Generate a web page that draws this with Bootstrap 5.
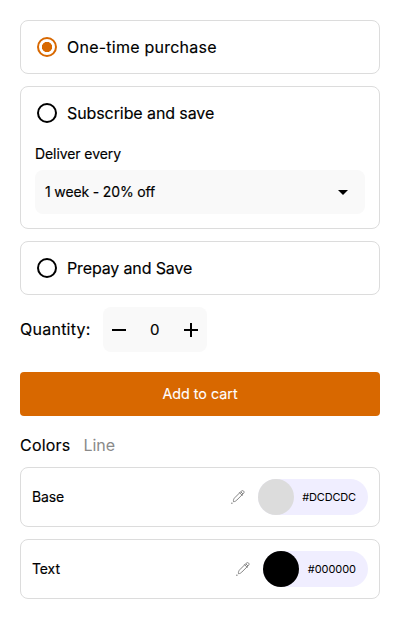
<!DOCTYPE html>
<html lang="en">
<head>
<meta charset="utf-8">
<meta name="viewport" content="width=device-width, initial-scale=1">
<title>Purchase options</title>
<link rel="stylesheet" href="https://cdn.jsdelivr.net/npm/bootstrap@5.3.0/dist/css/bootstrap.min.css">
<style>
body{font-family:Inter,"Liberation Sans",sans-serif;color:#000;font-size:14px;line-height:20px;-webkit-text-stroke:.15px}
.page{padding:20px 20px 0}
.plan-gap{margin-top:12px}
.panel{border:1px solid #dcdcdc;border-radius:8px;padding:0 14px}
.option{height:52px;font-size:16px;gap:10px;padding-left:2px}
.option .form-check-input{width:20px;height:20px;margin:0;border:2px solid #000;box-shadow:none;background-color:#fff;flex:none}
.option .form-check-input:checked{border-color:#d86800;background-image:radial-gradient(circle,#d86800 4.8px,transparent 5.4px)}
.panel-sub{padding-bottom:14px}
.deliver{height:31px;padding-top:5px}
.soft{background:#f9f9f9;border-radius:8px}
.picker{height:44px;padding:0 17px 0 10px;border:0;color:#000}
.quantity{font-size:16px;gap:12px;margin-bottom:20px}
.quantity-label{padding-bottom:1px}
.stepper{width:104px;height:45px;padding:0 9px;font-size:15px}
.buy{height:44px;border-radius:4px;background:#d86800;color:#fff;font-size:14.3px;border:0;-webkit-text-stroke:.1px}
.heads{font-size:16px;gap:13px;height:22px;margin:18px 0 11px}
.muted{color:#8a8a8a;-webkit-text-stroke:0}
.swatch-row{height:60px;padding:0 11px}
.edit{gap:12px}
.pill{height:36px;background:#f0eeff;border-radius:18px;font-size:11px;line-height:16px;padding-right:12px;gap:8.500px;-webkit-text-stroke:0}
.dot{width:36px;height:36px}
.dot-base{background:#dcdcdc}
.dot-text{background:#000}
.t-one{letter-spacing:.24px}
.t-sub{letter-spacing:-.09px}
.t-pre{letter-spacing:-.14px}
.t-week{letter-spacing:-.15px}
.t-del{letter-spacing:-.08px}
.t-qty{letter-spacing:.25px}
.t-col{letter-spacing:.2px}
.t-line{letter-spacing:0}
.t-base{letter-spacing:-.1px}
.t-hex{letter-spacing:-.15px}
.t-zero{letter-spacing:-.06px}
</style>
<script src="https://cdn.jsdelivr.net/npm/bootstrap@5.3.0/dist/js/bootstrap.bundle.min.js"></script>
</head>
<body class="bg-white">
<svg class="d-none"><symbol id="pencil" viewBox="0 0 16 16"><g fill="none" stroke="#777" stroke-width=".9" stroke-linejoin="round"><path d="M3.500 12.700c-.3-1.500.2-2.900 1.200-3.900L11.200 2.300c.8-.8 1.700-.9 2.400-.2s.6 1.600-.2 2.400L6.900 11c-1 1-2 1.700-3.400 1.700zM9.300 3.400l3.200 3.200M10.800 2.800l2.200 2.200"/><path d="M1.200 14.200h1.300" stroke="#555"/></g></symbol></svg>
<main class="page d-flex flex-column">
  <div class="panel"><label class="option d-flex align-items-center"><input class="form-check-input" type="radio" name="plan" checked><span class="t-one">One-time purchase</span></label></div>
  <div class="panel panel-sub plan-gap">
    <label class="option d-flex align-items-center"><input class="form-check-input" type="radio" name="plan"><span class="t-sub">Subscribe and save</span></label>
    <div class="deliver t-del">Deliver every</div>
    <button type="button" class="soft picker w-100 d-flex align-items-center justify-content-between"><span class="t-week">1 week - 20% off</span>
      <svg width="10" height="5" viewBox="0 0 10 5"><path d="M0 0h10L5 5z"/></svg></button>
  </div>
  <div class="panel plan-gap"><label class="option d-flex align-items-center"><input class="form-check-input" type="radio" name="plan"><span class="t-pre">Prepay and Save</span></label></div>
  <div class="plan-gap d-flex align-items-center quantity"><span class="quantity-label t-qty">Quantity:</span>
    <div class="soft stepper d-flex align-items-center justify-content-between">
      <svg width="14" height="14" viewBox="0 0 14 14"><path d="M0 7h14" stroke="#000" stroke-width="2"/></svg>
      <span>0</span>
      <svg width="14" height="14" viewBox="0 0 14 14"><path d="M0 7h14M7 0v14" stroke="#000" stroke-width="2"/></svg>
    </div>
  </div>
  <button type="button" class="btn buy p-0">Add to cart</button>
  <div class="heads d-flex align-items-center"><span class="t-col">Colors</span><span class="muted t-line">Line</span></div>
  <div class="panel swatch-row d-flex align-items-center justify-content-between"><span class="t-base">Base</span>
    <div class="d-flex align-items-center edit">
      <svg width="16" height="16"><use href="#pencil"/></svg>
      <div class="pill d-flex align-items-center"><span class="dot dot-base rounded-circle"></span><span class="t-hex">#DCDCDC</span></div>
    </div>
  </div>
  <div class="panel plan-gap swatch-row d-flex align-items-center justify-content-between"><span class="t-base">Text</span>
    <div class="d-flex align-items-center edit">
      <svg width="16" height="16"><use href="#pencil"/></svg>
      <div class="pill d-flex align-items-center"><span class="dot dot-text rounded-circle"></span><span class="t-zero">#000000</span></div>
    </div>
  </div>
</main>
</body>
</html>
